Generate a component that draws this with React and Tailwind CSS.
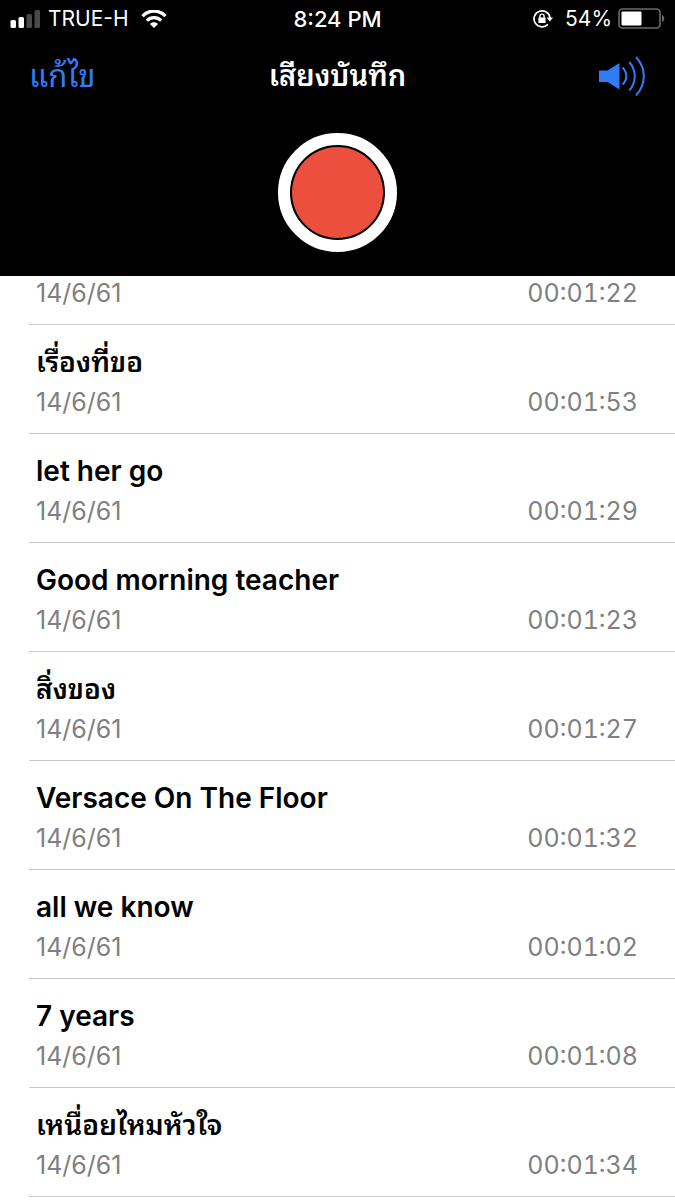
import React from "react";

const recordings = [
  { id: 1, title: "", date: "14/6/61", duration: "00:01:22" },
  { id: 2, title: "เรื่องที่ขอ", date: "14/6/61", duration: "00:01:53" },
  { id: 3, title: "let her go", date: "14/6/61", duration: "00:01:29" },
  { id: 4, title: "Good morning teacher", date: "14/6/61", duration: "00:01:23" },
  { id: 5, title: "สิ่งของ", date: "14/6/61", duration: "00:01:27" },
  { id: 6, title: "Versace On The Floor", date: "14/6/61", duration: "00:01:32" },
  { id: 7, title: "all we know", date: "14/6/61", duration: "00:01:02" },
  { id: 8, title: "7 years", date: "14/6/61", duration: "00:01:08" },
  { id: 9, title: "เหนื่อยไหมหัวใจ", date: "14/6/61", duration: "00:01:34" },
];

function SignalIcon() {
  return (
    <svg width="30" height="18" viewBox="0 0 30 18" aria-hidden="true">
      <rect x="0.5" y="10" width="5.5" height="8" rx="1.5" fill="#fff" />
      <rect x="8.5" y="7" width="5.5" height="11" rx="1.5" fill="#fff" />
      <rect x="16.5" y="4" width="5.5" height="14" rx="1.5" fill="#48484a" />
      <rect x="24.5" y="0" width="5.5" height="18" rx="1.5" fill="#48484a" />
    </svg>
  );
}

function WifiIcon() {
  return (
    <svg width="26" height="18" viewBox="0 0 26 18" fill="none" aria-hidden="true">
      <path d="M1.5 6.2C8 -0.6 18 -0.6 24.5 6.2" stroke="#fff" strokeWidth="3.4" />
      <path d="M5.8 10.6C9.8 6.6 16.2 6.6 20.2 10.6" stroke="#fff" strokeWidth="3.2" />
      <path d="M13 18L8.9 13.9C11.2 11.8 14.8 11.8 17.1 13.9Z" fill="#fff" />
    </svg>
  );
}

function RotationLockIcon() {
  return (
    <svg width="20" height="20" viewBox="0 0 20 20" fill="none" aria-hidden="true">
      <path d="M14.8 15.4A8 8 0 1 1 17 9" stroke="#fff" strokeWidth="1.7" />
      <path d="M13.6 8.6H20L16.9 12.6Z" fill="#fff" />
      <rect x="5.4" y="8.6" width="7.2" height="5.4" rx="0.6" fill="#fff" />
      <path d="M6.9 9V7.2a2.1 2.1 0 0 1 4.2 0V9" stroke="#fff" strokeWidth="1.4" />
    </svg>
  );
}

function BatteryIcon() {
  return (
    <svg width="47" height="21" viewBox="0 0 47 21" fill="none" aria-hidden="true">
      <rect x="1" y="1" width="41" height="19" rx="3.5" stroke="#6b6b6d" strokeWidth="1.6" />
      <rect x="3.5" y="3.5" width="20" height="14" rx="1" fill="#fff" />
      <path d="M44 7c3 1.2 3 5.8 0 7Z" fill="#6b6b6d" />
    </svg>
  );
}

function SpeakerIcon() {
  return (
    <svg width="47" height="40" viewBox="0 0 47 40" fill="none" aria-hidden="true">
      <path d="M0 14.5H8.5L20.5 7V33.5L8.5 26H0Z" fill="#2f7cf6" />
      <g stroke="#2f7cf6" strokeWidth="2">
        <path d="M23.5 11.5C28.6 16.5 28.6 23.6 23.5 28.6" />
        <path d="M30.3 6C37.6 14.5 37.6 26 30.3 34.5" />
        <path d="M37 1C47.4 12.5 47.4 28 37 39.5" />
      </g>
    </svg>
  );
}

function StatusBar() {
  return (
    <div className="grid h-[37px] grid-cols-[1fr_auto_1fr] items-center px-2.5 text-[21px] leading-9 text-white">
      <div className="flex items-center">
        <SignalIcon />
        <span className="ml-2 mr-3">TRUE-H</span>
        <WifiIcon />
      </div>
      <span className="text-[22px] font-medium">8:24 PM</span>
      <div className="flex items-center justify-end">
        <RotationLockIcon />
        <span className="ml-3 mr-1.5">54%</span>
        <BatteryIcon />
      </div>
    </div>
  );
}

function RecordingRow({ recording }) {
  return (
    <li className="border-b border-[#c8c7cc] pr-[37px] pb-[13px] pl-[7px]">
      {recording.title && (
        <h2 className="pt-[17px] text-[28px] leading-10 font-semibold text-black">
          {recording.title}
        </h2>
      )}
      <div className="flex justify-between pt-0.5 text-[25px] leading-9 text-[#808080]">
        <span>{recording.date}</span>
        <span className="tabular-nums">{recording.duration}</span>
      </div>
    </li>
  );
}

function App() {
  return (
    <div className="min-h-screen bg-white font-['Inter','Thonburi','Noto_Sans_Thai_Looped','Loma','Noto_Sans_Thai',sans-serif]">
      <header className="bg-black pb-6">
        <StatusBar />
        <nav className="grid h-[78px] grid-cols-[1fr_auto_1fr] items-center px-[29px]">
          <button type="button" className="justify-self-start text-[31px] text-[#2f7cf6]">
            แก้ไข
          </button>
          <h1 className="text-[29px] font-semibold text-white">เสียงบันทึก</h1>
          <button type="button" aria-label="ลำโพง" className="justify-self-end">
            <SpeakerIcon />
          </button>
        </nav>
        <div className="flex justify-center pt-[18px]">
          <button
            type="button"
            aria-label="บันทึก"
            className="size-[119px] rounded-full border-12 border-white bg-black p-0.5"
          >
            <span className="block size-full rounded-full bg-[#ec4f3d]" />
          </button>
        </div>
      </header>

      {/* the list is scrolled a little, so the first row starts under the header */}
      <main className="overflow-hidden pl-[29px]">
        <ul className="-mt-[3px]">
          {recordings.map((recording) => (
            <RecordingRow key={recording.id} recording={recording} />
          ))}
        </ul>
      </main>
    </div>
  );
}

export default App;
